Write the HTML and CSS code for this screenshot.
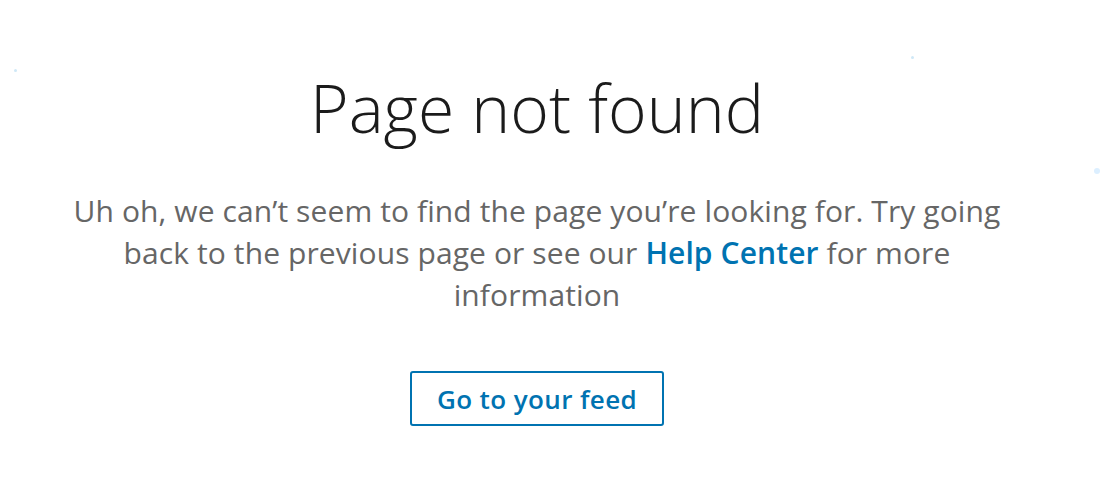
FILE: index.html
```html
<!DOCTYPE html>
<html lang="en">
<head>
<meta charset="utf-8">
<title>Page not found</title>
<link rel="stylesheet" href="styles.css">
</head>
<body>
<main class="page">
  <span class="speck speck-a"></span>
  <span class="speck speck-b"></span>
  <span class="speck speck-c"></span>
  <section class="error">
    <h1 class="error-title">Page not found</h1>
    <p class="error-text">Uh oh, we can’t seem to find the page you’re looking for. Try going back to the previous page or see our <a class="error-link" href="#">Help Center</a> for more information</p>
    <a class="error-button" href="#">Go to your feed</a>
  </section>
</main>
</body>
</html>
```

FILE: styles.css
```css
html, body {
  margin: 0;
  padding: 0;
  background: #ffffff;
}

.page {
  position: relative;
  width: 1103px;
  height: 477px;
  overflow: hidden;
  box-sizing: border-box;
  padding-right: 29px;
}

.error {
  display: flex;
  flex-direction: column;
  align-items: center;
  text-align: center;
  padding-top: 63px;
}

.error-title {
  margin: 0;
  font-family: "Open Sans", "Noto Sans", sans-serif;
  font-weight: 300;
  font-size: 66px;
  line-height: 88px;
  color: #1b1b1b;
}

.error-text {
  margin: 39px 0 0;
  max-width: 940px;
  font-family: "Open Sans", "Noto Sans", sans-serif;
  font-weight: 400;
  font-size: 30px;
  letter-spacing: 0.1px;
  line-height: 42px;
  color: #666666;
}

.error-link {
  color: #0073b1;
  font-weight: 600;
  text-decoration: none;
}

.error-button {
  margin-top: 55px;
  box-sizing: border-box;
  width: 254px;
  height: 55px;
  display: flex;
  align-items: center;
  justify-content: center;
  border: 2px solid #0073b1;
  border-radius: 3px;
  font-family: "Open Sans", "Noto Sans", sans-serif;
  font-weight: 600;
  font-size: 26px;
  letter-spacing: 0.4px;
  color: #0073b1;
  text-decoration: none;
}

.speck {
  position: absolute;
  width: 3px;
  height: 3px;
  border-radius: 50%;
  background: #cfe8f7;
}

.speck-a { left: 14px; top: 69px; }
.speck-b { left: 911px; top: 56px; }
.speck-c { left: 1094px; top: 168px; width: 6px; height: 6px; background: #dcefff; }
```
